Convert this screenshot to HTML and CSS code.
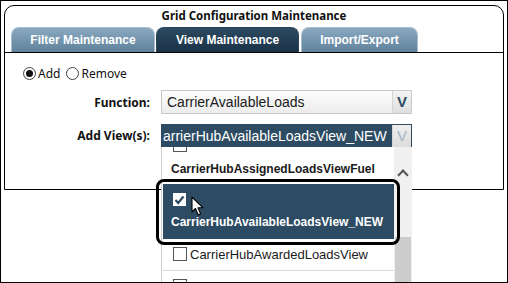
FILE: index.html
```html
<!DOCTYPE html>
<html lang="en">
<head>
    <meta charset="UTF-8">
    <title>Grid Configuration Maintenance</title>
    <link rel="stylesheet" href="styles.css">
</head>
<body>
    <div class="frame">
        <div class="panel">
            <h1>Grid Configuration Maintenance</h1>

            <div class="tabs">
                <div class="tab">Filter Maintenance</div>
                <div class="tab active">View Maintenance</div>
                <div class="tab">Import/Export</div>
            </div>

            <div class="content">
                <div class="radios">
                    <label class="radio"><span class="dot checked"></span>Add</label>
                    <label class="radio"><span class="dot"></span>Remove</label>
                </div>

                <div class="form-row">
                    <span class="label">Function:</span>
                    <div class="select">
                        <span class="value">CarrierAvailableLoads</span>
                        <span class="arrow">V</span>
                    </div>
                </div>

                <div class="form-row">
                    <span class="label">Add View(s):</span>
                    <div class="select open">
                        <span class="value clipped">arrierHubAvailableLoadsView_NEW</span>
                        <span class="arrow faded">V</span>

                        <div class="dropdown">
                            <div class="list">
                                <div class="item stub"><span class="box"></span></div>
                                <div class="item bold">CarrierHubAssignedLoadsViewFuel</div>
                                <div class="item selected">
                                    <span class="box ticked">
                                        <svg width="11" height="10" viewBox="0 0 11 10"><path d="M1.5 5 L4.2 8 L9.5 1.5" fill="none" stroke="#2d4c63" stroke-width="2.2"/></svg>
                                    </span>
                                    <span>CarrierHubAvailableLoadsView_NEW</span>
                                    <svg class="cursor" width="14" height="21" viewBox="0 0 14 21"><path d="M1 1 L1 16 L4.5 12.5 L7.2 19 L9.6 18 L7 11.8 L12 11.8 Z" fill="#fff" stroke="#000" stroke-width="1.1" stroke-linejoin="round"/></svg>
                                </div>
                                <div class="item row"><span class="box"></span>CarrierHubAwardedLoadsView</div>
                                <div class="item row"><span class="box"></span>CarrierHubBiddingLoadsView</div>
                            </div>
                            <div class="scrollbar">
                                <span class="up"></span>
                                <span class="thumb"></span>
                            </div>
                            <div class="callout"></div>
                        </div>
                    </div>
                </div>
            </div>
        </div>
    </div>
</body>
</html>
```

FILE: styles.css
```css
* {
    box-sizing: border-box;
    margin: 0;
    padding: 0;
}

body {
    width: 508px;
    height: 283px;
    overflow: hidden;
    background: #fff;
    font-family: 'Noto Sans', 'Liberation Sans', Arial, sans-serif;
    color: #111;
}

.frame {
    width: 508px;
    height: 283px;
    border: 1px solid #000;
    padding: 4px 4px 0 3px;
    overflow: hidden;
}

.panel {
    width: 500px;
    height: 185px;
    border: 1px solid #000;
    border-radius: 10px 10px 0 0;
}

h1 {
    font-size: 11.5px;
    font-weight: 700;
    text-align: center;
    height: 21px;
    line-height: 19px;
}

.tabs {
    display: flex;
    gap: 1px;
    padding-left: 6px;
    height: 26px;
    border-bottom: 1px solid #000;
}

.tab {
    width: 144px;
    height: 25px;
    border: 1px solid #a9bfd0;
    border-bottom: none;
    border-radius: 8px 8px 0 0;
    background: linear-gradient(#8aa9c1, #5f819b);
    color: #fff;
    font-family: 'Liberation Sans', Arial, sans-serif;
    font-size: 12px;
    font-weight: 700;
    text-align: center;
    line-height: 25px;
}

.tab.active {
    width: 143px;
    border-color: #2a4458;
    background: linear-gradient(#2c4a62, #1a3246);
}

.tab:last-child {
    width: 117px;
    margin-left: 1px;
}

.content {
    padding: 9px 0 0 0;
}

.radios {
    display: flex;
    gap: 6px;
    padding-left: 18px;
    height: 22px;
    align-items: center;
    font-size: 12px;
}

.radio {
    display: flex;
    align-items: center;
    gap: 2px;
}

.dot {
    width: 13px;
    height: 13px;
    border: 1px solid #444;
    border-radius: 50%;
    background: #fff;
    display: inline-flex;
    align-items: center;
    justify-content: center;
}

.dot.checked::after {
    content: '';
    width: 7px;
    height: 7px;
    border-radius: 50%;
    background: #111;
}

.form-row {
    display: flex;
    align-items: center;
    margin-top: 6px;
}

.form-row + .form-row {
    margin-top: 10px;
}

.label {
    width: 145px;
    text-align: right;
    font-size: 12px;
    font-weight: 700;
    color: #111;
    margin-right: 11px;
}

.select {
    position: relative;
    display: flex;
    align-items: center;
    width: 251px;
    height: 24px;
    border: 1px solid #c9c9c9;
    background: linear-gradient(#fdfdfd, #ececec);
    font-family: 'Liberation Sans', Arial, sans-serif;
    font-size: 14px;
    color: #1a1a1a;
}

.value {
    flex: 1;
    padding-left: 5px;
    white-space: nowrap;
    overflow: hidden;
}

.arrow {
    width: 19px;
    height: 22px;
    border-left: 1px solid #d6d6d6;
    background: linear-gradient(#f4f4f4, #dedede);
    text-align: center;
    line-height: 22px;
    font-size: 15px;
    font-weight: 700;
    color: #2b4a62;
}

.select.open {
    height: 23px;
    border-color: #2d4c63;
    background: #2d4c63;
    color: #fff;
}

.value.clipped {
    padding-left: 1px;
}

.arrow.faded {
    color: #a3b6c4;
    font-weight: 400;
    background: linear-gradient(#eeeeee, #dcdcdc);
}

.dropdown {
    position: absolute;
    top: 22px;
    left: -1px;
    width: 251px;
    height: 140px;
    border-left: 1px solid #d0d0d0;
    background: #fff;
    display: flex;
    color: #1a1a1a;
}

.list {
    flex: 1;
    overflow: hidden;
    padding-left: 1px;
}

.item {
    display: flex;
    align-items: center;
    gap: 3px;
    padding-left: 10px;
    font-size: 13px;
    white-space: nowrap;
}

.item.stub {
    height: 7px;
    align-items: flex-end;
    overflow: hidden;
}

.item.stub .box {
    margin-bottom: 2px;
}

.item.bold {
    height: 29px;
    padding-left: 8px;
    font-size: 12px;
    font-weight: 700;
}

.item.selected {
    position: relative;
    flex-direction: column;
    align-items: flex-start;
    gap: 9px;
    height: 55px;
    margin-top: 1px;
    padding: 9px 0 0 8px;
    background: #2d4c63;
    color: #fff;
    font-size: 12px;
    font-weight: 700;
}

.item.selected .box {
    margin-left: 2px;
}

.item.row {
    height: 32px;
    align-items: flex-start;
    padding-top: 8px;
    line-height: 16px;
    border-bottom: 1px solid #dcdcdc;
}

.box {
    width: 14px;
    height: 14px;
    border: 1px solid #555;
    background: #fff;
    flex: none;
}

.box.ticked {
    width: 13px;
    height: 13px;
    border-color: #fff;
    display: flex;
    align-items: center;
    justify-content: center;
}

.cursor {
    position: absolute;
    left: 28px;
    top: 12px;
}

.scrollbar {
    width: 18px;
    background: #f0f0f0;
    display: flex;
    flex-direction: column;
    align-items: center;
}

.up {
    width: 8px;
    height: 8px;
    margin-top: 24px;
    border-top: 2px solid #555;
    border-left: 2px solid #555;
    transform: rotate(45deg);
}

.thumb {
    margin-top: 58px;
    width: 16px;
    flex: 1;
    background: #cdcdcd;
}

.callout {
    position: absolute;
    left: -6px;
    top: 32px;
    width: 244px;
    height: 66px;
    border: 3px solid #000;
    border-radius: 8px;
}
```
